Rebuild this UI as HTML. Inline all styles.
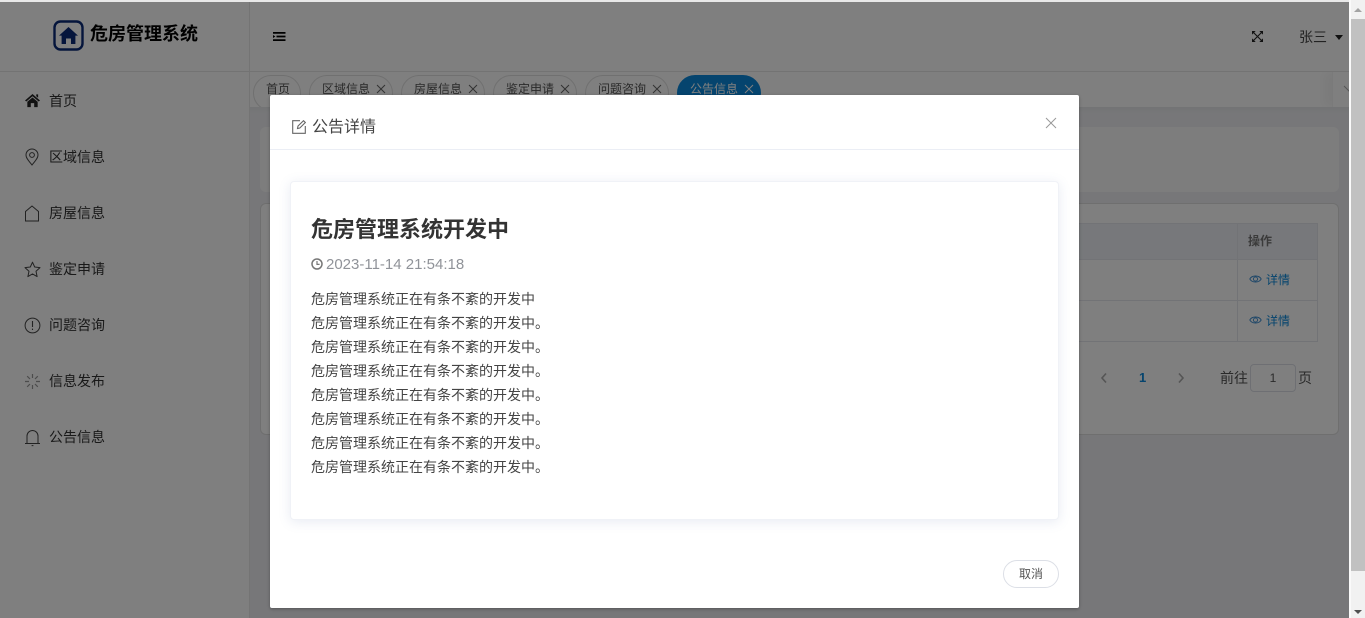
<!DOCTYPE html>
<html lang="zh">
<head>
<meta charset="utf-8">
<style>
*{box-sizing:border-box}
html,body{margin:0;padding:0;width:1365px;height:618px;overflow:hidden;background:#fff;font-family:"Liberation Sans","Noto Sans CJK SC",sans-serif;color:#333}
.a{position:absolute}
svg{display:block}
#page{position:absolute;left:0;top:2px;width:1349px;height:616px;background:#eeeff2;overflow:hidden}
#side{left:0;top:0;width:250px;height:616px;background:#fff;border-right:1px solid #e8e8e8}
#logo{left:0;top:0;width:250px;height:70px;border-bottom:1px solid #e6e6e6}
.mi{position:absolute;left:49px;font-size:14px;line-height:20px;color:#333;white-space:nowrap}
.ic{position:absolute;left:23px}
#top{left:250px;top:0;width:1099px;height:70px;background:#fff;border-bottom:1px solid #e6e6e6}
#tabs{left:250px;top:70px;width:1099px;height:35px;background:#fff;overflow:hidden}
.tab{position:absolute;top:3px;height:36px;border:1px solid #e0e0e0;border-radius:18px;font-size:12px;line-height:26px;padding-left:12px;color:#555;white-space:nowrap;background:#fff}
.tab i{position:absolute;right:5px;top:7px;width:12px;height:12px}
.card{background:#fff;border:1px solid #dedede;border-radius:6px}
#ov{left:0;top:0;width:1349px;height:618px;background:rgba(0,0,0,.5)}
#dlg{left:270px;top:95px;width:809px;height:513px;background:#fff;border-radius:2px;box-shadow:0 1px 3px rgba(0,0,0,.3)}
#inner{left:20px;top:86px;width:769px;height:339px;border-radius:4px;background:#fff;border:1px solid #f0f2f7;box-shadow:0 2px 12px rgba(90,110,170,.14)}
.l{position:absolute;left:20px;font-size:14px;line-height:24px;color:#444;white-space:nowrap}
#sb{left:1349px;top:0;width:16px;height:618px;background:#f1f1f1;border-left:2px solid #fafafa}
</style>
</head>
<body>
<div id="page">
  <div id="side" class="a">
    <div id="logo" class="a">
      <svg class="a" style="left:53px;top:18px" width="31" height="31" viewBox="0 0 31 31"><rect x="1.5" y="1.5" width="28" height="28" rx="6" fill="none" stroke="#0a2a78" stroke-width="2.4"/><path d="M15.5 7 L25 15.6 L22.4 15.6 L22.4 24 L18 24 L18 18.5 L13 18.5 L13 24 L8.6 24 L8.6 15.6 L6 15.6 Z" fill="#0a2a78"/></svg>
      <div class="a" style="left:90px;top:19px;font-size:18px;line-height:26px;font-weight:700;color:#000;white-space:nowrap">危房管理系统</div>
    </div>
    <svg class="ic" style="top:91px;left:24px" width="17" height="15" viewBox="0 0 18 16"><path d="M9 1 L17 8 L15.6 9 L9 3.4 L2.4 9 L1 8 Z M13 1.5 L15 1.5 L15 5 L13 3.4 Z M3.5 9.3 L9 4.8 L14.5 9.3 L14.5 15 L10.8 15 L10.8 10.8 L7.2 10.8 L7.2 15 L3.5 15 Z" fill="#222"/></svg>
    <div class="mi" style="top:89px">首页</div>
    <svg class="ic" style="top:146px;left:25px" width="14" height="18" viewBox="0 0 14 18"><path d="M7 17 C4 13 1 10.5 1 7 A6 6 0 0 1 13 7 C13 10.5 10 13 7 17 Z" fill="none" stroke="#444" stroke-width="1"/><circle cx="7" cy="7" r="2.4" fill="none" stroke="#444" stroke-width="1"/></svg>
    <div class="mi" style="top:145px">区域信息</div>
    <svg class="ic" style="top:203px;left:24px" width="16" height="17" viewBox="0 0 16 17"><path d="M1.5 16 L1.5 6.5 L8 1 L14.5 6.5 L14.5 16 Z" fill="none" stroke="#444" stroke-width="1"/></svg>
    <div class="mi" style="top:201px">房屋信息</div>
    <svg class="ic" style="top:259px;left:24px" width="17" height="17" viewBox="0 0 17 17"><path d="M8.5 1.2 L10.7 6 L16 6.6 L12 10.2 L13.1 15.6 L8.5 12.9 L3.9 15.6 L5 10.2 L1 6.6 L6.3 6 Z" fill="none" stroke="#444" stroke-width="1" stroke-linejoin="round"/></svg>
    <div class="mi" style="top:257px">鉴定申请</div>
    <svg class="ic" style="top:315px;left:24px" width="17" height="17" viewBox="0 0 17 17"><circle cx="8.5" cy="8.5" r="7.4" fill="none" stroke="#444" stroke-width="1"/><path d="M8.5 4 L8.5 10 M8.5 11.6 L8.5 13" stroke="#444" stroke-width="1.1"/></svg>
    <div class="mi" style="top:313px">问题咨询</div>
    <svg class="ic" style="top:371px;left:24px" width="17" height="17" viewBox="0 0 17 17"><path d="M8.5 1 V5 M8.5 12 V16 M1 8.5 H5 M12 8.5 H16 M3.2 3.2 L6 6 M13.8 3.2 L11 6 M3.2 13.8 L6 11 M13.8 13.8 L11 11" stroke="#999" stroke-width="1.2"/></svg>
    <div class="mi" style="top:369px">信息发布</div>
    <svg class="ic" style="top:427px;left:24px" width="17" height="18" viewBox="0 0 17 18"><path d="M1 14.5 H16 M3 14.5 V7 A5.5 5.5 0 0 1 14 7 V14.5 M8.5 1 V1.6 M7.6 16.6 H9.4" fill="none" stroke="#444" stroke-width="1"/></svg>
    <div class="mi" style="top:425px">公告信息</div>
  </div>

  <div id="top" class="a">
    <svg class="a" style="left:23px;top:30px" width="13" height="9" viewBox="0 0 13 9"><path d="M0 0 H12.5 V1.7 H0 Z M3.5 3.6 H12.5 V5.4 H3.5 Z M0 7.2 H12.5 V9 H0 Z M0 3 L2.4 4.5 L0 6 Z" fill="#000"/></svg>
    <svg class="a" style="left:1002px;top:29px" width="11" height="11" viewBox="0 0 12 12"><path d="M1.5 1.5 L10.5 10.5 M10.5 1.5 L1.5 10.5" stroke="#222" stroke-width="1.2"/><path d="M0 0 H4 L0 4 Z M12 0 H8 L12 4 Z M0 12 H4 L0 8 Z M12 12 H8 L12 8 Z" fill="#222"/></svg>
    <div class="a" style="left:1049px;top:25px;font-size:14px;line-height:20px;color:#444">张三</div>
    <div class="a" style="left:1085px;top:33px;width:0;height:0;border:4px solid transparent;border-top:5px solid #222;border-bottom:0"></div>
  </div>

  <div id="tabs" class="a">
    <div class="tab" style="left:3px;width:48px">首页</div>
    <div class="tab" style="left:59px;width:84px">区域信息<i><svg width="12" height="12" viewBox="0 0 12 12"><path d="M2 2 L10 10 M10 2 L2 10" stroke="#666" stroke-width="1"/></svg></i></div>
    <div class="tab" style="left:151px;width:84px">房屋信息<i><svg width="12" height="12" viewBox="0 0 12 12"><path d="M2 2 L10 10 M10 2 L2 10" stroke="#666" stroke-width="1"/></svg></i></div>
    <div class="tab" style="left:243px;width:84px">鉴定申请<i><svg width="12" height="12" viewBox="0 0 12 12"><path d="M2 2 L10 10 M10 2 L2 10" stroke="#666" stroke-width="1"/></svg></i></div>
    <div class="tab" style="left:335px;width:84px">问题咨询<i><svg width="12" height="12" viewBox="0 0 12 12"><path d="M2 2 L10 10 M10 2 L2 10" stroke="#666" stroke-width="1"/></svg></i></div>
    <div class="tab" style="left:427px;width:84px;background:#0a88dc;border-color:#0a88dc;color:#fff">公告信息<i><svg width="12" height="12" viewBox="0 0 12 12"><path d="M2 2 L10 10 M10 2 L2 10" stroke="#fff" stroke-width="1"/></svg></i></div>
    <div class="a" style="left:1082px;top:0;width:17px;height:35px;background:#fff;border-left:1px solid #f4f4f4;box-shadow:-8px 0 10px rgba(0,0,0,.04);overflow:hidden"><svg class="a" style="left:10px;top:12px" width="13" height="10" viewBox="0 0 13 10"><path d="M1 2 L6 7 L11 2" fill="none" stroke="#aaa" stroke-width="1"/></svg></div>
  </div>
  <div class="a" style="left:250px;top:105px;width:1099px;height:6px;background:linear-gradient(#e6e7ea,#eeeff2)"></div>

  <div class="a" style="left:260px;top:125px;width:1079px;height:65px;background:#fbfbfb;border-radius:6px"></div>
  <div class="a card" style="left:260px;top:201px;width:1079px;height:232px">
    <div class="a" style="left:12px;top:19px;width:1045px;height:37px;background:#eef1f6;border:1px solid #e4e7ed"></div>
    <div class="a" style="left:12px;top:56px;width:1045px;height:41px;border:1px solid #e4e7ed;border-top:0"></div>
    <div class="a" style="left:12px;top:97px;width:1045px;height:41px;border:1px solid #e4e7ed;border-top:0"></div>
    <div class="a" style="left:976px;top:19px;width:1px;height:119px;background:#e4e7ed"></div>
    <div class="a" style="left:987px;top:28px;font-size:12px;line-height:18px;font-weight:700;color:#777">操作</div>
    <svg class="a" style="left:988px;top:70px" width="13" height="10" viewBox="0 0 13 10"><path d="M.8 5 C3 1 10 1 12.2 5 C10 9 3 9 .8 5 Z" fill="none" stroke="#3a8cd0" stroke-width=".9"/><circle cx="6.5" cy="5" r="2.1" fill="none" stroke="#3a8cd0" stroke-width=".9"/></svg>
    <div class="a" style="left:1005px;top:67px;font-size:12px;line-height:18px;color:#0a88dc">详情</div>
    <svg class="a" style="left:988px;top:111px" width="13" height="10" viewBox="0 0 13 10"><path d="M.8 5 C3 1 10 1 12.2 5 C10 9 3 9 .8 5 Z" fill="none" stroke="#3a8cd0" stroke-width=".9"/><circle cx="6.5" cy="5" r="2.1" fill="none" stroke="#3a8cd0" stroke-width=".9"/></svg>
    <div class="a" style="left:1005px;top:108px;font-size:12px;line-height:18px;color:#0a88dc">详情</div>
    <svg class="a" style="left:838px;top:168px" width="10" height="12" viewBox="0 0 10 12"><path d="M7 1.5 L3 6 L7 10.5" fill="none" stroke="#aaa" stroke-width="1.6"/></svg>
    <div class="a" style="left:878px;top:165px;font-size:13px;line-height:18px;font-weight:700;color:#0a88dc">1</div>
    <svg class="a" style="left:915px;top:168px" width="10" height="12" viewBox="0 0 10 12"><path d="M3 1.5 L7 6 L3 10.5" fill="none" stroke="#aaa" stroke-width="1.6"/></svg>
    <div class="a" style="left:959px;top:164px;font-size:14px;line-height:20px;color:#555">前往</div>
    <div class="a" style="left:989px;top:160px;width:46px;height:28px;border:1px solid #dcdfe6;border-radius:4px;background:#fff;font-size:12px;line-height:26px;text-align:center;color:#555">1</div>
    <div class="a" style="left:1037px;top:164px;font-size:14px;line-height:20px;color:#555">页</div>
  </div>
</div>

<div id="ov" class="a"></div>
<div class="a" style="left:0;top:0;width:1349px;height:2px;background:#e8e8e8"></div>

<div id="dlg" class="a">
  <svg class="a" style="left:22px;top:25px" width="14" height="14" viewBox="0 0 14 14"><path d="M8 .7 H.7 V13.3 H13.3 V6" fill="none" stroke="#666" stroke-width="1.1"/><path d="M5.5 8.5 L6 6 L11.5 .7 L13.3 2.5 L7.8 8 Z" fill="none" stroke="#666" stroke-width="1.1"/></svg>
  <div class="a" style="left:42px;top:21px;font-size:16px;line-height:24px;color:#444;white-space:nowrap">公告详情</div>
  <svg class="a" style="left:775px;top:22px" width="12" height="12" viewBox="0 0 12 12"><path d="M1 1 L11 11 M11 1 L1 11" stroke="#999" stroke-width="1"/></svg>
  <div class="a" style="left:0;top:54px;width:809px;height:1px;background:#ebeef5"></div>
  <div id="inner" class="a">
    <div class="a" style="left:20px;top:32px;font-size:22px;line-height:32px;font-weight:700;color:#333;white-space:nowrap">危房管理系统开发中</div>
    <svg class="a" style="left:20px;top:76px" width="12" height="12" viewBox="0 0 12 12"><circle cx="6" cy="6" r="5" fill="none" stroke="#777" stroke-width="1.5"/><path d="M6 3 V6.4 H8.6" fill="none" stroke="#777" stroke-width="1.2"/></svg>
    <div class="a" style="left:35px;top:73px;font-size:15px;line-height:20px;color:#909399;white-space:nowrap">2023-11-14 21:54:18</div>
    <div class="l" style="top:105px">危房管理系统正在有条不紊的开发中</div>
    <div class="l" style="top:129px">危房管理系统正在有条不紊的开发中。</div>
    <div class="l" style="top:153px">危房管理系统正在有条不紊的开发中。</div>
    <div class="l" style="top:177px">危房管理系统正在有条不紊的开发中。</div>
    <div class="l" style="top:201px">危房管理系统正在有条不紊的开发中。</div>
    <div class="l" style="top:225px">危房管理系统正在有条不紊的开发中。</div>
    <div class="l" style="top:249px">危房管理系统正在有条不紊的开发中。</div>
    <div class="l" style="top:273px">危房管理系统正在有条不紊的开发中。</div>
  </div>
  <div class="a" style="left:733px;top:465px;width:56px;height:28px;border:1px solid #dcdfe6;border-radius:14px;background:#fff;font-size:12px;line-height:26px;text-align:center;color:#555">取消</div>
</div>

<div id="sb" class="a">
  <div class="a" style="left:3px;top:8px;width:0;height:0;border:4px solid transparent;border-bottom:4px solid #a3a3a3;border-top:0"></div>
  <div class="a" style="left:0;top:19px;width:14px;height:552px;background:#c1c1c1"></div>
  <div class="a" style="left:3px;top:610px;width:0;height:0;border:4px solid transparent;border-top:4px solid #505050;border-bottom:0"></div>
</div>
</body>
</html>
